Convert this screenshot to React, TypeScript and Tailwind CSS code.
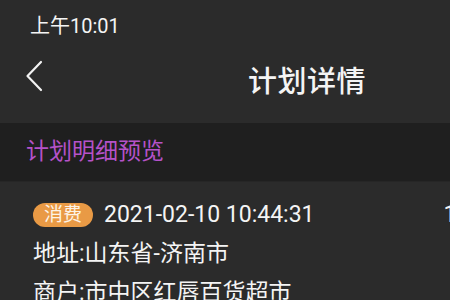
import React from "react";

export default function App() {
  return (
    <div
      className="w-[450px] h-[300px] overflow-hidden bg-[#2b2b2b] text-[#f4f4f4] flex flex-col"
      style={{ fontFamily: "Roboto, 'Noto Sans CJK SC', sans-serif" }}
    >
      <div className="h-[52px] shrink-0 pl-[30px] pt-[12px] text-[20px] leading-[28px]">上午10:01</div>

      <div className="h-[71px] shrink-0 flex items-start pl-[25px] pt-[8px]">
        <svg width="18" height="32" viewBox="0 0 18 32" fill="none" className="shrink-0">
          <path d="M16 2 L2.5 16 L16 30" stroke="#f2f2f2" strokeWidth="2.2" strokeLinecap="round" strokeLinejoin="round" />
        </svg>
        <div className="ml-[205px] text-[29px] leading-[36px] font-medium tracking-[0.5px] mt-[4px]">计划详情</div>
      </div>

      <div className="h-[59px] shrink-0 bg-[#1f1f1f] flex items-center pl-[26px] text-[23px] text-[#b552c9] border-b border-[#262626]">
        计划明细预览
      </div>

      <div className="pl-[33px] pt-[20px] flex flex-col">
        <div className="flex items-center h-[26px] whitespace-nowrap">
          <span className="w-[60px] h-[24px] rounded-full bg-[#e99a45] text-[#fdf3e6] text-[19px] leading-[24px] flex items-center justify-center shrink-0">
            消费
          </span>
          <span className="ml-[11px] text-[23px] leading-[26px] shrink-0">2021-02-10 10:44:31</span>
          <span className="ml-[129px] text-[23px] leading-[26px] shrink-0">100.00</span>
        </div>
        <div className="mt-[12px] text-[23px] leading-[28px] whitespace-nowrap">地址:山东省-济南市</div>
        <div className="mt-[11px] text-[23px] leading-[28px] whitespace-nowrap">商户:市中区红唇百货超市</div>
      </div>
    </div>
  );
}
